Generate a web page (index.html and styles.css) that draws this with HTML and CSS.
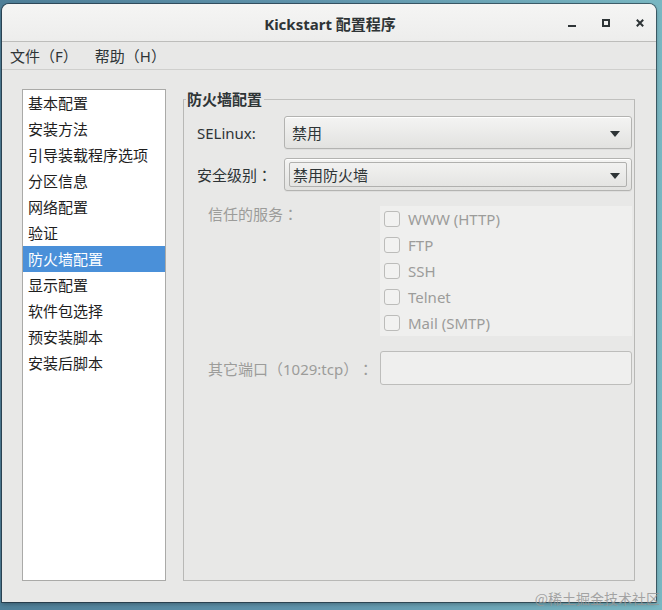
FILE: index.html
```html
<!DOCTYPE html>
<html lang="zh-CN">
<head>
<meta charset="utf-8">
<title>Kickstart 配置程序</title>
<link rel="stylesheet" href="styles.css">
</head>
<body>
<div class="window">
  <header class="titlebar">
    <div class="title">Kickstart 配置程序</div>
    <div class="controls">
      <svg class="ctl" width="8" height="8" viewBox="0 0 8 8"><rect x="0" y="6" width="8" height="2" fill="#2e3436"/></svg>
      <svg class="ctl" width="8" height="8" viewBox="0 0 8 8"><rect x="1" y="1" width="6" height="6" fill="none" stroke="#2e3436" stroke-width="2"/></svg>
      <svg class="ctl" width="8" height="8" viewBox="0 0 8 8"><path d="M0.8 0.8 L7.2 7.2 M7.2 0.8 L0.8 7.2" stroke="#2e3436" stroke-width="2"/></svg>
    </div>
  </header>
  <nav class="menubar">
    <span class="menu">文件（F）</span>
    <span class="menu">帮助（H）</span>
  </nav>
  <main class="content">
    <ul class="sidebar">
      <li>基本配置</li>
      <li>安装方法</li>
      <li>引导装载程序选项</li>
      <li>分区信息</li>
      <li>网络配置</li>
      <li>验证</li>
      <li class="selected">防火墙配置</li>
      <li>显示配置</li>
      <li>软件包选择</li>
      <li>预安装脚本</li>
      <li>安装后脚本</li>
    </ul>
    <fieldset class="frame">
      <legend>防火墙配置</legend>
      <div class="row">
        <label class="lbl">SELinux:</label>
        <div class="combo"><span>禁用</span><i class="arrow"></i></div>
      </div>
      <div class="row">
        <label class="lbl">安全级别<span class="fw">：</span></label>
        <div class="combo focus"><div class="focusring"><span>禁用防火墙</span><i class="arrow"></i></div></div>
      </div>
      <div class="row2 services">
        <label class="lbl2">信任的服务<span class="fw">：</span></label>
        <div class="checks">
          <div class="check"><span class="box"></span>WWW (HTTP)</div>
          <div class="check"><span class="box"></span>FTP</div>
          <div class="check"><span class="box"></span>SSH</div>
          <div class="check"><span class="box"></span>Telnet</div>
          <div class="check"><span class="box"></span>Mail (SMTP)</div>
        </div>
      </div>
      <div class="row2 ports">
        <label class="lbl2">其它端口（1029:tcp）<span class="fw">：</span></label>
        <div class="entry"></div>
      </div>
    </fieldset>
  </main>
  <div class="watermark">@稀土掘金技术社区</div>
</div>
</body>
</html>
```

FILE: styles.css
```css
* { box-sizing: border-box; }
html, body { margin: 0; padding: 0; }
body {
  width: 662px;
  height: 610px;
  overflow: hidden;
  background: linear-gradient(90deg, #4f7f98 0%, #5f93ab 45%, #79b7c2 100%);
  font-family: "Noto Sans", "Noto Sans CJK SC", sans-serif;
  font-size: 15px;
  color: #2e3436;
  text-spacing-trim: space-all;
}
.window {
  position: relative;
  margin: 4px 6px 0 2px;
  width: 654px;
  height: 598px;
  background: #e8e8e7;
  border-radius: 7px 7px 0 0;
  box-shadow: 0 0 0 1px rgba(20, 30, 40, 0.55), 0 2px 4px rgba(0,0,0,0.3);
  display: flex;
  flex-direction: column;
}
.titlebar {
  height: 38px;
  flex: none;
  display: flex;
  align-items: center;
  justify-content: center;
  background: linear-gradient(#f5f5f4, #ededec);
  border-bottom: 1px solid #bdbdbb;
  border-radius: 7px 7px 0 0;
  position: relative;
}
.title {
  font-weight: bold;
  font-size: 15px;
  color: #2e3436;
  margin-left: 2px;
  margin-top: 1px;
}
.controls {
  position: absolute;
  right: 12px;
  top: 15px;
  display: flex;
  gap: 26px;
}
.ctl { display: block; }
.menubar {
  height: 28px;
  flex: none;
  display: flex;
  align-items: center;
  gap: 17px;
  padding-left: 8px;
  border-bottom: 1px solid #cfcfcd;
  font-size: 15px;
}
.fw {
  display: inline-block;
  width: 1em;
  text-align: center;
  font-family: "Noto Sans CJK JP", "Noto Sans CJK TC", sans-serif;
  font-feature-settings: "locl" 0;
}
.content {
  flex: 1;
  display: flex;
  gap: 17px;
  padding: 19px 21px 21px 20px;
  min-height: 0;
}
.sidebar {
  list-style: none;
  margin: 0;
  padding: 0;
  width: 144px;
  flex: none;
  background: #fff;
  border: 1px solid #aaaaa8;
}
.sidebar li {
  height: 26px;
  line-height: 26px;
  padding-left: 5px;
  color: #1e1e1e;
  white-space: nowrap;
}
.sidebar li.selected {
  background: #4a90d9;
  color: #fff;
}
.frame {
  flex: 1;
  margin: 0;
  padding: 7px 2px 0 13px;
  border: 1px solid #b8b8b6;
  border-top-color: #c0c0be;
  min-width: 0;
}
.frame legend {
  font-weight: bold;
  font-size: 15px;
  line-height: 20px;
  padding: 0 2px 0 1px;
  margin-left: -11px;
  color: #2e3436;
}
.row {
  display: flex;
  align-items: center;
  margin-bottom: 9px;
}
.lbl {
  width: 87px;
  flex: none;
  color: #2e3436;
}
.combo {
  flex: 1;
  height: 33px;
  border: 1px solid #b3b3b1;
  border-radius: 3px;
  background: linear-gradient(#f4f4f3, #e2e2e0);
  box-shadow: inset 0 1px 0 #fff, 0 1px 0 rgba(0,0,0,0.04);
  display: flex;
  align-items: center;
  padding: 0 11px 0 7px;
}
.combo span { flex: 1; }
.combo.focus { padding: 3px 4px; }
.focusring {
  flex: 1;
  height: 100%;
  display: flex;
  align-items: center;
  border: 1px solid #b0b0ae;
  border-radius: 2px;
  padding: 0 6px 0 3px;
}
.arrow {
  width: 0;
  height: 0;
  border-left: 5px solid transparent;
  border-right: 5px solid transparent;
  border-top: 6px solid #2e3436;
  margin-top: 2px;
}
.row2 {
  display: flex;
  padding-left: 11px;
}
.lbl2 {
  width: 172px;
  flex: none;
  color: #9c9c9a;
}
.services { margin-top: 15px; }
.services .lbl2 { line-height: 16px; }
.checks {
  flex: 1;
  background: #efefee;
}
.check {
  height: 26px;
  display: flex;
  align-items: center;
  padding-left: 4px;
  color: #9c9c9a;
}
.box {
  width: 16px;
  height: 16px;
  border: 1px solid #bcbcba;
  border-radius: 3px;
  background: #f2f2f1;
  margin-right: 8px;
  flex: none;
}
.ports {
  margin-top: 15px;
  align-items: center;
}
.entry {
  flex: 1;
  height: 34px;
  border: 1px solid #bdbdbb;
  border-radius: 3px;
  background: #efefee;
}
.watermark {
  position: absolute;
  right: -4px;
  bottom: -6px;
  font-size: 14px;
  color: rgba(150, 150, 150, 0.85);
  font-family: "Noto Sans CJK SC", sans-serif;
}
```
